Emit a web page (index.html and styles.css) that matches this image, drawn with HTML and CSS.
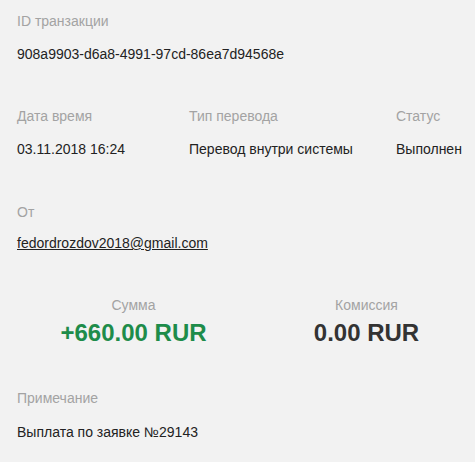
FILE: index.html
```html
<!DOCTYPE html>
<html lang="ru">
<head>
<meta charset="utf-8">
<title>Транзакция</title>
<link rel="stylesheet" href="styles.css">
</head>
<body>
<div class="details">
  <section class="field s1">
    <div class="label">ID транзакции</div>
    <div class="value">908a9903-d6a8-4991-97cd-86ea7d94568e</div>
  </section>

  <section class="row3 s2">
    <div class="field">
      <div class="label">Дата время</div>
      <div class="value">03.11.2018 16:24</div>
    </div>
    <div class="field">
      <div class="label">Тип перевода</div>
      <div class="value">Перевод внутри системы</div>
    </div>
    <div class="field">
      <div class="label">Статус</div>
      <div class="value">Выполнен</div>
    </div>
  </section>

  <section class="field s3">
    <div class="label">От</div>
    <div class="value"><a class="email" href="#">fedordrozdov2018@gmail.com</a></div>
  </section>

  <section class="row2 s4">
    <div class="field center">
      <div class="label">Сумма</div>
      <div class="amount plus">+660.00 RUR</div>
    </div>
    <div class="field center">
      <div class="label">Комиссия</div>
      <div class="amount">0.00 RUR</div>
    </div>
  </section>

  <section class="field s5">
    <div class="label">Примечание</div>
    <div class="value">Выплата по заявке №29143</div>
  </section>
</div>
</body>
</html>
```
FILE: styles.css
```css
html, body {
  margin: 0;
  padding: 0;
  background: #f2f2f2;
  overflow: hidden;
}
body {
  font-family: "Liberation Sans", Arial, sans-serif;
  font-size: 14px;
  color: #222;
}
.details {
  padding: 11px 0 0 17px;
  display: flex;
  flex-direction: column;
}
.field {
  display: flex;
  flex-direction: column;
}
.label {
  line-height: 20px;
  color: #a3a3a3;
}
.value {
  line-height: 20px;
  margin-top: 13px;
  white-space: nowrap;
}
.s2 { margin-top: 42px; }
.s2 .value { margin-top: 13px; }
.s3 { margin-top: 43px; }
.s3 .value { margin-top: 11px; }
.s4 { margin-top: 42px; }
.s5 { margin-top: 40px; }
.s5 .value { margin-top: 14px; }
.row3 {
  display: grid;
  grid-template-columns: 172px 207px auto;
}
.row2 {
  display: grid;
  grid-template-columns: 233px 233px;
}
.center {
  align-items: center;
  text-align: center;
}
.amount {
  margin-top: 3px;
  font-size: 24px;
  font-weight: bold;
  line-height: 30px;
  color: #333;
}
.amount.plus {
  color: #1e8c4a;
}
.email {
  color: #222;
  text-decoration: underline;
}
```
